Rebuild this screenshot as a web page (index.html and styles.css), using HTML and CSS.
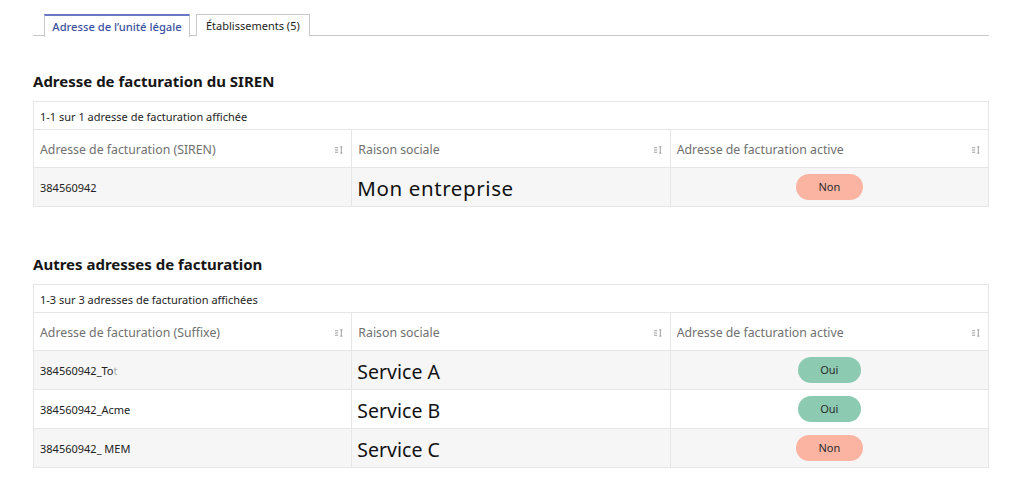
FILE: index.html
```html
<!DOCTYPE html>
<html lang="fr">
<head>
<meta charset="utf-8">
<title>Adresses de facturation</title>
<link rel="stylesheet" href="styles.css">
</head>
<body>
<div class="page">
  <nav class="tabs">
    <div class="tab tab-active">Adresse de l’unité légale</div>
    <div class="tab">Établissements (5)</div>
  </nav>

  <h2 class="section-title first">Adresse de facturation du SIREN</h2>
  <table class="grid">
    <tr><td class="caption" colspan="3">1-1 sur 1 adresse de facturation affichée</td></tr>
    <tr class="head">
      <th><div class="th-in"><span>Adresse de facturation (SIREN)</span><svg class="sort" viewBox="0 0 10 8"><path d="M0 1.5h3.5M0 4h3.5M0 6.5h3.5M7 0.5v7M5.8 0.5h2.4M5.8 7.5h2.4"/></svg></div></th>
      <th><div class="th-in"><span>Raison sociale</span><svg class="sort" viewBox="0 0 10 8"><path d="M0 1.5h3.5M0 4h3.5M0 6.5h3.5M7 0.5v7M5.8 0.5h2.4M5.8 7.5h2.4"/></svg></div></th>
      <th><div class="th-in"><span>Adresse de facturation active</span><svg class="sort" viewBox="0 0 10 8"><path d="M0 1.5h3.5M0 4h3.5M0 6.5h3.5M7 0.5v7M5.8 0.5h2.4M5.8 7.5h2.4"/></svg></div></th>
    </tr>
    <tr class="odd">
      <td>384560942</td>
      <td class="big big-1">Mon entreprise</td>
      <td class="center"><span class="pill pill-no">Non</span></td>
    </tr>
  </table>

  <h2 class="section-title second">Autres adresses de facturation</h2>
  <table class="grid">
    <tr><td class="caption" colspan="3">1-3 sur 3 adresses de facturation affichées</td></tr>
    <tr class="head">
      <th><div class="th-in"><span>Adresse de facturation (Suffixe)</span><svg class="sort" viewBox="0 0 10 8"><path d="M0 1.5h3.5M0 4h3.5M0 6.5h3.5M7 0.5v7M5.8 0.5h2.4M5.8 7.5h2.4"/></svg></div></th>
      <th><div class="th-in"><span>Raison sociale</span><svg class="sort" viewBox="0 0 10 8"><path d="M0 1.5h3.5M0 4h3.5M0 6.5h3.5M7 0.5v7M5.8 0.5h2.4M5.8 7.5h2.4"/></svg></div></th>
      <th><div class="th-in"><span>Adresse de facturation active</span><svg class="sort" viewBox="0 0 10 8"><path d="M0 1.5h3.5M0 4h3.5M0 6.5h3.5M7 0.5v7M5.8 0.5h2.4M5.8 7.5h2.4"/></svg></div></th>
    </tr>
    <tr class="odd">
      <td>384560942_To<span class="cut">t</span></td>
      <td class="big">Service A</td>
      <td class="center"><span class="pill pill-yes">Oui</span></td>
    </tr>
    <tr>
      <td>384560942_Acme</td>
      <td class="big">Service B</td>
      <td class="center"><span class="pill pill-yes">Oui</span></td>
    </tr>
    <tr class="odd">
      <td>384560942_ MEM</td>
      <td class="big">Service C</td>
      <td class="center"><span class="pill pill-no">Non</span></td>
    </tr>
  </table>
</div>
</body>
</html>
```

FILE: styles.css
```css
* { box-sizing: border-box; }
html, body { margin: 0; padding: 0; background: #fff; }
body {
  font-family: "Noto Sans", "Open Sans", sans-serif;
  color: #161616;
}
.page {
  width: 956px;
  margin-left: 33px;
}

.tabs {
  display: flex;
  gap: 6px;
  padding: 14px 0 0 11px;
  border-bottom: 1px solid #c8c8c8;
  height: 36px;
}
.tab {
  height: 22px;
  padding: 0 9px;
  display: flex;
  align-items: center;
  white-space: nowrap;
  font-size: 11px;
  border: 1px solid #c8c8c8;
  border-bottom: none;
  background: #fff;
  color: #1e1e1e;
}
.tab-active {
  width: 146px;
  padding: 0;
  justify-content: center;
  border-top: 2px solid #6a79c6;
  color: #3c52a0;
  font-weight: 500;
  height: 23px;
  font-size: 11.2px;
}

.section-title {
  font-size: 15px;
  font-weight: 700;
  margin: 0;
  line-height: 20px;
  color: #161616;
}
.section-title.first { margin-top: 35px; margin-bottom: 10px; }
.section-title.second { margin-top: 47px; margin-bottom: 10px; }

.grid {
  width: 956px;
  border-collapse: collapse;
  table-layout: fixed;
  font-size: 11px;
}
.grid td, .grid th {
  border: 1px solid #e6e6e6;
  padding: 0 6px;
  text-align: left;
  font-weight: 400;
  vertical-align: middle;
}
.grid td.caption {
  height: 28px;
  color: #1e1e1e;
  padding-top: 1px;
}
.grid .head th {
  height: 38px;
  color: #707070;
  font-size: 12.3px;
  padding-top: 2px;
}
.th-in {
  display: flex;
  align-items: center;
  justify-content: space-between;
}
.sort {
  width: 9px;
  height: 8px;
  margin-right: 1px;
  fill: none;
  stroke: #8a8a8a;
  stroke-width: 0.9;
}
.grid tr.odd td { background: #f6f6f6; }
.grid td { height: 39px; color: #222; }
.grid td.big {
  font-size: 19.5px;
  color: #111;
  padding-left: 5px;
  padding-top: 2px;
}
.grid td.big-1 { font-size: 20.5px; letter-spacing: 0.6px; }
.cut { opacity: 0.35; }
.center { text-align: center !important; }
.pill {
  display: inline-block;
  height: 26px;
  line-height: 26px;
  border-radius: 13px;
  font-size: 11px;
  color: #2b2b2b;
}
.pill-no { width: 67px; background: #fbb4a2; }
.pill-yes { width: 63px; background: #8ccbb1; }
```
